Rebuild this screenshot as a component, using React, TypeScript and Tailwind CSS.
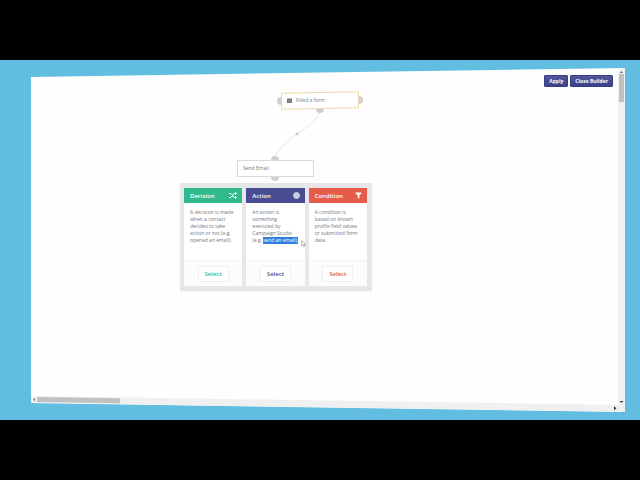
import React, { useState } from "react";

type CardType = {
  title: string;
  body: React.ReactNode;
  head: string;
  select: string;
  icon: React.ReactNode;
};

const ShuffleIcon = () => (
  <svg viewBox="0 0 16 14" className="h-[7px] w-2" aria-hidden="true">
    <g fill="none" stroke="#fff" strokeWidth="2">
      <path d="M0 3h3c4 0 4 8 8 8h2" />
      <path d="M0 11h3c4 0 4-8 8-8h2" />
    </g>
    <path d="M12 0l4 3-4 3zM12 8l4 3-4 3z" fill="#fff" />
  </svg>
);

const TargetIcon = () => (
  <svg viewBox="0 0 14 14" className="size-[7px]" aria-hidden="true">
    <circle cx="7" cy="7" r="6" fill="#b4b7da" stroke="#e4e5f2" strokeWidth="1.6" />
    <circle cx="7" cy="7" r="3.2" fill="#9a9ecb" stroke="#fff" strokeWidth="1.4" />
    <circle cx="7" cy="7" r="1.2" fill="#fff" />
  </svg>
);

const FilterIcon = () => (
  <svg viewBox="0 0 14 14" className="size-[7px]" aria-hidden="true">
    <path d="M1 1h12v1.5L8.6 7v6.5L5.4 11V7L1 2.500z" fill="#fff" />
  </svg>
);

const cards: CardType[] = [
  {
    title: "Decision",
    body: "A decision is made when a contact decides to take action or not (e.g. opened an email).",
    head: "bg-[#31ba8e]",
    select: "text-[#31ba8e]",
    icon: <ShuffleIcon />,
  },
  {
    title: "Action",
    body: (
      <>
        An action is something executed by Campaign Studio{" "}
        <span className="flex gap-px whitespace-nowrap">
          (e.g. <mark className="bg-[#2f80dc] text-white">send an email).</mark>
        </span>
      </>
    ),
    head: "bg-[#484c91]",
    select: "text-[#484c91]",
    icon: <TargetIcon />,
  },
  {
    title: "Condition",
    body: "A condition is based on known profile field values or submitted form data.",
    head: "bg-[#e65c4b]",
    select: "text-[#dc5245]",
    icon: <FilterIcon />,
  },
];

const Card = ({
  card,
  onSelect,
}: {
  card: CardType;
  onSelect: (title: string) => void;
}) => (
  <article className="flex min-w-0 flex-1 flex-col bg-white">
    <header
      className={`flex h-[15px] items-center justify-between pr-[5px] pl-[6px] ${card.head}`}
    >
      <h2 className="text-[6px] leading-[8px] font-semibold text-white">
        {card.title}
      </h2>
      {card.icon}
    </header>
    <p className="flex-1 pt-[6px] pr-2 pl-[6px] text-[5px] leading-[7px] text-[#77777b]">
      {card.body}
    </p>
    <footer className="flex h-[26px] items-center justify-center border-t border-[#f4f4f6] bg-[#fcfcfd]">
      <button
        type="button"
        onClick={() => onSelect(card.title)}
        className={`h-4 w-[31px] rounded-[1px] border border-[#efeff2] bg-white text-[6px] leading-[8px] font-semibold ${card.select}`}
      >
        Select
      </button>
    </footer>
  </article>
);

const Connectors = () => (
  <svg
    width="340"
    height="120"
    className="absolute top-0 left-0"
    aria-hidden="true"
  >
    <g fill="#d0d0d0">
      <circle cx="250" cy="33" r="4" />
      <circle cx="328" cy="32" r="4" />
      <circle cx="289" cy="41" r="4" />
      <circle cx="244" cy="92" r="4" />
      <circle cx="244" cy="109" r="4" />
    </g>
    <path
      d="M289 44C286 53 276 59 266 66C257 73 248 79 244 89"
      fill="none"
      stroke="#d8d8d8"
      strokeWidth="0.7"
    />
    <circle cx="266" cy="66" r="1.3" fill="#c4c4c4" />
  </svg>
);

const toolbarButton =
  "h-3 rounded-[1px] border border-[#383c80] bg-linear-to-b from-[#53579c] to-[#3c4086] px-1 text-[5px] leading-[8px] font-bold text-white";

const App = () => {
  const [, setSelected] = useState("");

  return (
    <main className="flex min-h-screen flex-col bg-black py-[60px] font-['Open_Sans',sans-serif]">
      <div className="flex flex-1 flex-col bg-[#61bee1] py-2 pr-[15px] pl-[31px]">
        <div className="flex flex-1 flex-col bg-[#fefefe] [clip-path:polygon(0_9px,100%_0,100%_100%,0_calc(100%-9px))]">
          <div className="flex flex-1">
            <section className="relative min-h-[240px] flex-1">
              <div className="flex justify-end gap-[2px] pt-[7px] pr-[5px]">
                <button type="button" className={toolbarButton}>
                  Apply
                </button>
                <button type="button" className={toolbarButton}>
                  Close Builder
                </button>
              </div>

              <Connectors />

              <div className="absolute top-[24px] left-[250px] flex h-[17px] w-[78px] items-center gap-[4px] pl-[6px]">
                <span className="absolute inset-0 -skew-y-1 border border-[#eadba6] bg-white" />
                <svg viewBox="0 0 10 10" className="relative size-[5px]" aria-hidden="true">
                  <rect y="1" width="10" height="9" rx="1" fill="#77777b" />
                  <path d="M2 4h6M2 7h6" stroke="#a5a5a8" strokeWidth="1" />
                </svg>
                <span className="relative text-[5px] leading-[7px] text-[#77777b]">
                  Filled a form
                </span>
              </div>

              <div className="absolute top-[92px] left-[206px] flex h-[17px] w-[77px] items-center border border-[#d9d9e3] bg-white pl-[5px]">
                <span className="text-[5px] leading-[7px] text-[#77777b]">
                  Send Email
                </span>
              </div>

              <div className="absolute top-[115px] left-[149px] flex h-[108px] w-[192px] gap-[4px] rounded-[1px] bg-[#e7e7ea] py-[5px] pr-[5px] pl-[4px] shadow-xs shadow-gray-100">
                {cards.map((card) => (
                  <Card key={card.title} card={card} onSelect={setSelected} />
                ))}
              </div>

              <svg
                viewBox="0 0 8 12"
                className="absolute top-[172px] left-[270px] h-[7px] w-[5px]"
                aria-hidden="true"
              >
                <path
                  d="M1 1v9l2-2 1.500 3.500 1.500-.7L4.600 7.500H7.500z"
                  fill="#fff"
                  stroke="#85858a"
                />
              </svg>
            </section>

            <div className="flex w-[7px] flex-col items-center bg-[#f0f0f0]">
              <svg viewBox="0 0 7 6" className="h-[6px] w-[7px]" aria-hidden="true">
                <path d="M1.800 5L3.500 3 5.200 5z" fill="#707070" />
              </svg>
              <div className="h-[28px] w-[5px] bg-[#c1c1c1]" />
              <svg viewBox="0 0 7 6" className="mt-auto h-[6px] w-[7px]" aria-hidden="true">
                <path d="M1.500 2H5.500L3.500 4z" fill="#404040" />
              </svg>
            </div>
          </div>

          <div className="flex h-[7px] origin-right skew-y-[0.87deg] items-center bg-[#f0f0f0]">
            <svg viewBox="0 0 6 7" className="h-[7px] w-[6px]" aria-hidden="true">
              <path d="M4 1.800V5.200L2 3.500z" fill="#808080" />
            </svg>
            <div className="h-[5px] w-[14%] bg-[#c1c1c1]" />
            <svg viewBox="0 0 6 7" className="mr-[7px] ml-auto h-[7px] w-[6px]" aria-hidden="true">
              <path d="M2 1.500V5.500L4.500 3.500z" fill="#303030" />
            </svg>
          </div>
        </div>
      </div>
    </main>
  );
};

export default App;
